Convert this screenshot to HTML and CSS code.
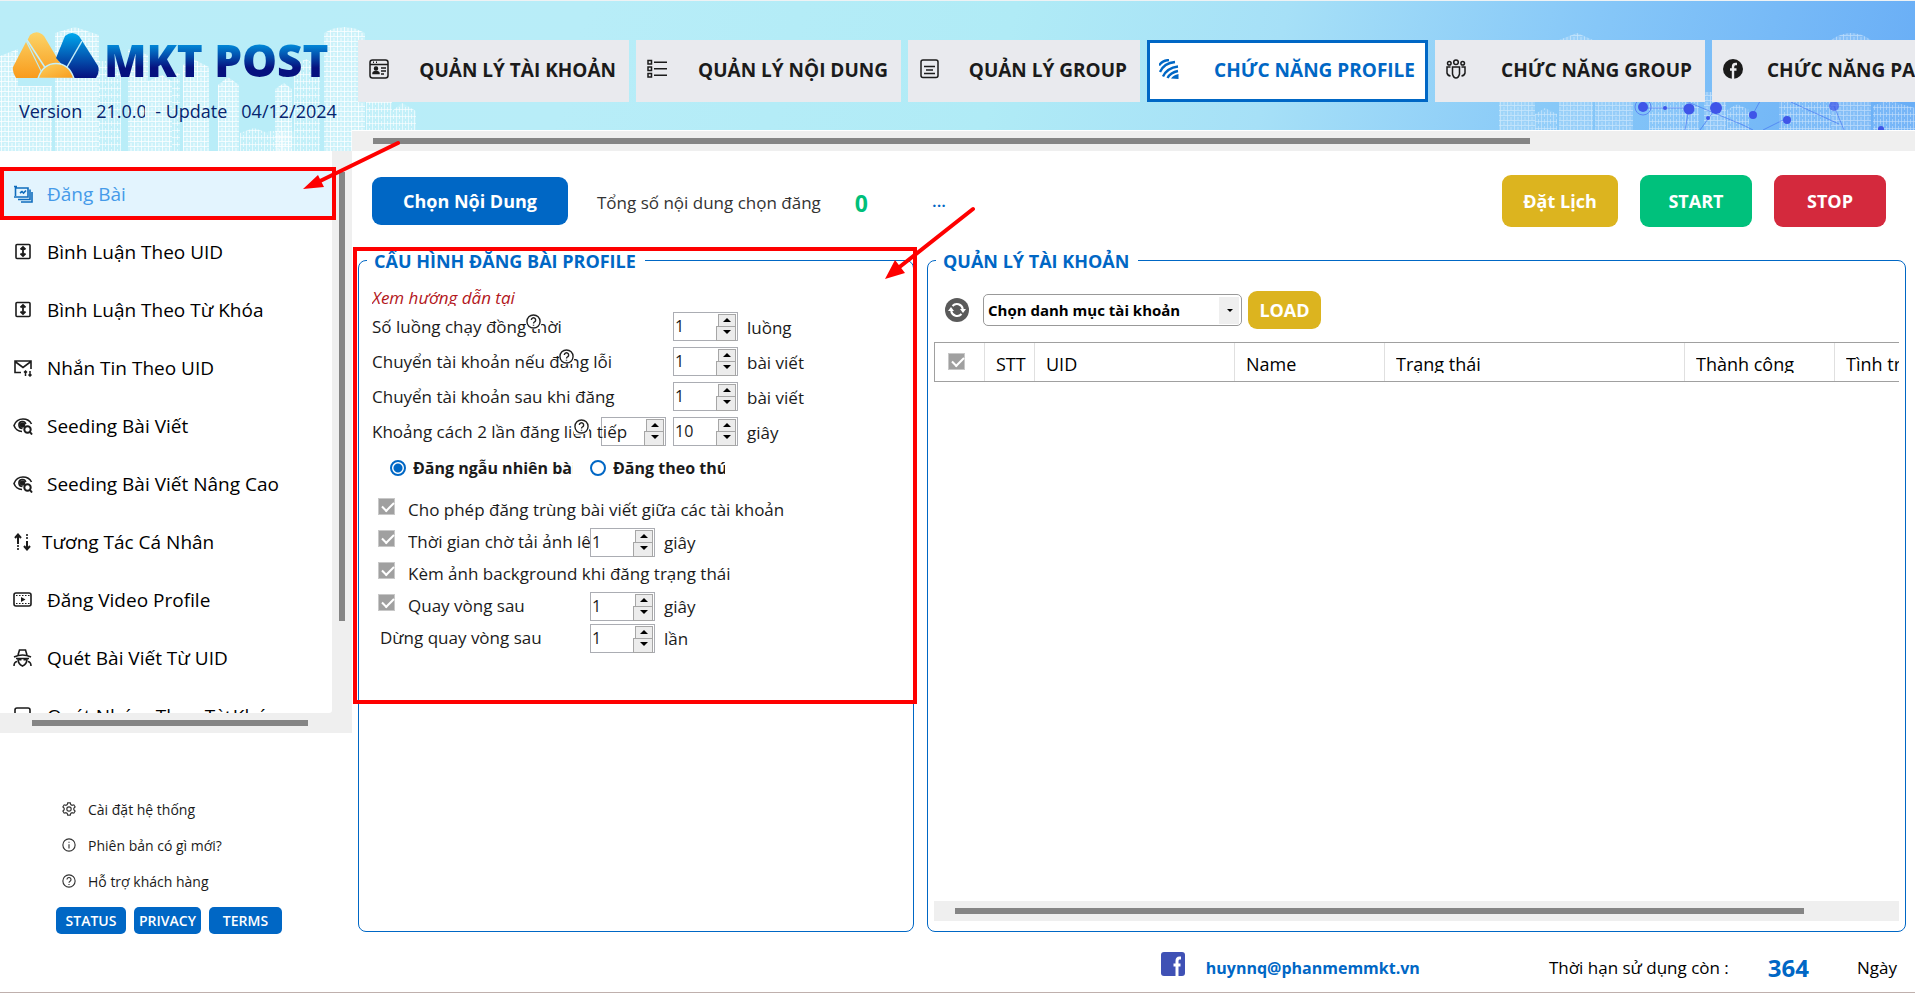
FILE: index.html
```html
<!DOCTYPE html>
<html lang="vi">
<head>
<meta charset="utf-8">
<title>MKT POST</title>
<link rel="stylesheet" href="styles.css">
</head>
<body>
<svg class="defs" aria-hidden="true">
  <defs>
    <linearGradient id="gold" x1="0" y1="0" x2="0" y2="1"><stop offset="0" stop-color="#fbd468"/><stop offset="1" stop-color="#f99b1c"/></linearGradient>
    <linearGradient id="goldArc" x1="0" y1="0" x2="1" y2="1"><stop offset="0" stop-color="#fcd25f"/><stop offset="1" stop-color="#f99b1c"/></linearGradient>
    <linearGradient id="navy" x1="0" y1="0" x2="0" y2="1"><stop offset="0" stop-color="#00a9ee"/><stop offset="1" stop-color="#06117f"/></linearGradient>
    <pattern id="win" width="7" height="5" patternUnits="userSpaceOnUse"><rect width="7" height="5" fill="#fff" fill-opacity=".28"/><path d="M0 .5H7M1.5 0V5M5 2V5" stroke="#fff" stroke-opacity=".75"/></pattern>
    <pattern id="win2" width="6" height="7" patternUnits="userSpaceOnUse"><rect width="6" height="7" fill="#fff" fill-opacity=".15"/><path d="M.5 0V7M3.5 1V6M0 3.5H6" stroke="#fff" stroke-opacity=".6"/></pattern>
    <symbol id="i-help" viewBox="0 0 16 16"><circle cx="8" cy="8" r="7"/><path d="M5.7 6.3a2.3 2.3 0 1 1 3.500 2C8.300 8.900 8 9.300 8 10M8 11.400v1.200"/></symbol>
    <symbol id="i-updown" viewBox="0 0 18 18"><rect x="2" y="1.500" width="14" height="14" rx="1"/><path d="M9 4v9M6.500 6.500 9 4l2.500 2.500M6.500 10.500 9 13l2.500-2.500" stroke-width="1.800"/></symbol>
    <symbol id="i-seed" viewBox="0 0 20 18"><path d="M9 14.500C5 14.500 2 11.500 1 8.500 2.500 4.500 6 2 10 2s7 2 8.500 5"/><path d="M9.500 11.500A3.500 3.500 0 1 1 12.800 7"/><circle cx="9.500" cy="8" r="2" fill="currentColor"/><circle cx="14.500" cy="12.500" r="3.200" stroke-width="2"/><path d="m17 15 2 2.500" stroke-width="2"/></symbol>
  </defs>
</svg>

<div class="app">
  <header class="top">
    <svg class="city city-left" viewBox="0 0 420 150" aria-hidden="true">
      <g fill="url(#win)">
        <path d="M0 55l18-7v102H0zM55 150V32l20-6 24 8v116zM128 150V48h4V32v16l16 6v96zM18 150V85h34v65zM148 150V80l14-6 10 6v70zM183 150V64l10-6 16 8v84zM218 150V84l10-8 11 8v66zM275 150V88l9-6 8 6v62z"/>
      </g>
      <g fill="url(#win2)">
        <path d="M99 150V60h22v90zM172 150V72h8v78zM294 150V64l12-6 14 8v84zM240 150v-18l14-5 14 5v18zM268 150v-20h52v20z"/>
      </g>
      <path fill="url(#win)" d="M324 150V32q20-12 41 0v118z"/>
      <path fill="url(#win2)" d="M366 130V100h26v30zM392 130v-20l10-8 14 8v20z"/>
    </svg>
    <svg class="city city-right" viewBox="0 0 416 110" aria-hidden="true">
      <g fill="url(#win)" opacity=".55">
        <path d="M0 110V70h36v40zM60 110V20l18-7 16 7v90zM96 110V72h38v38zM205 110V72h22v38zM332 110V20q20-14 40 0v90z"/>
      </g>
      <g fill="url(#win2)" opacity=".6"><path d="M36 110V94l10-6 12 6v16zM150 110V82h50v28zM228 110V90l10-6 12 6v20zM280 110V76h52v34zM374 110V86l14-6 28 8v22z"/></g>
      <g stroke="#3f6df0" stroke-opacity=".6" fill="none"><path d="M144 88h46M190 88l-4 22M184 80l60 25 10 5M217 88l-16 22M254 94l12-22M288 98l-24 12M270 72l70 32M335 86l10 24"/></g>
      <g fill="#3f55e8"><circle cx="144" cy="87" r="5"/><circle cx="190" cy="89" r="5.500"/><circle cx="217" cy="88" r="6"/><circle cx="254" cy="95" r="4"/><circle cx="288" cy="100" r="4"/><circle cx="335" cy="86" r="5" fill-opacity=".7"/><circle cx="166" cy="88" r="2"/><circle cx="209" cy="98" r="2"/><circle cx="382" cy="109" r="3"/></g>
      <circle cx="144" cy="87" r="8" fill="none" stroke="#5b86f3"/>
    </svg>
    <div class="brand">
      <div class="logo">
        <svg width="88" height="46" viewBox="0 0 88 46" aria-hidden="true">
          <path fill="url(#gold)" d="M18 3q7-6 14 1l16 27-15 15L15 9zM14 10l18 36H4q-4-6-3-11z"/>
          <path d="M15 8l19 29" stroke="#c5eff8" stroke-width="1.500"/>
          <path fill="url(#navy)" d="M53 4q7-6 14 0l19 30q2 6-2 12H62L44 26z"/>
          <path d="M70 9 55 35" stroke="#c5eff8" stroke-width="1.500"/>
          <path fill="url(#goldArc)" stroke="#c5eff8" stroke-width="1.500" d="M26 46.500q5-15 18-15t18 15z"/>
        </svg>
        <span class="logo-text">MKT POST</span>
      </div>
      <div class="version"><span>Version</span><span class="ver-no">21.0.0</span><span>- Update</span><span>04/12/2024</span></div>
    </div>
    <div class="tabs-wrap">
      <nav class="tabs">
        <button class="tab"><svg width="20" height="20" viewBox="0 0 20 20"><rect x="1" y="1" width="18" height="18" rx="2.500"/><path d="M1 5.500h18M4 3.300h1M7 3.300h1M12 9h5M12 12h5M12 15h3"/><circle cx="7" cy="9.500" r="1.500" fill="currentColor"/><path d="M4 14.500q0-2 3-2t3 2z" fill="currentColor"/></svg><span>QUẢN LÝ TÀI KHOẢN</span></button>
        <button class="tab"><svg width="20" height="20" viewBox="0 0 20 20"><path d="M1 1.500h3.500V5H1zM1 8h3.500v3.500H1zM1 14.500h3.500V18H1zM7 3.300h13M7 9.800h13M7 16.300h13"/></svg><span>QUẢN LÝ NỘI DUNG</span></button>
        <button class="tab"><svg width="20" height="20" viewBox="0 0 20 20"><rect x="2" y="1" width="17" height="17.500" rx="2"/><path d="M5 7.500h11M7 11h7M5 14.500h11"/></svg><span>QUẢN LÝ GROUP</span></button>
        <button class="tab active"><svg width="20" height="20" viewBox="0 0 20 20"><path d="M0 6.500Q3 1.500 10 1M1 13Q5 4 16 3M4 17.500Q8 9 19 7.500M8.500 19q3-5.500 10.500-7" stroke-width="2.400"/><path d="M12 19.500q2-3.500 7.500-4.500v5z" fill="currentColor" stroke="none"/></svg><span>CHỨC NĂNG PROFILE</span></button>
        <button class="tab"><svg width="20" height="20" viewBox="0 0 20 20"><circle cx="10" cy="3.200" r="2.300"/><circle cx="3.300" cy="4.200" r="1.800"/><circle cx="16.700" cy="4.200" r="1.800"/><path d="M6.500 8h7v7q-1 4-3.500 4t-3.500-4zM4.500 8H1v6q.5 2.500 3.500 3M15.500 8H19v6q-.5 2.500-3.500 3"/></svg><span>CHỨC NĂNG GROUP</span></button>
        <button class="tab page-tab"><svg width="20" height="20" viewBox="0 0 20 20"><circle cx="10" cy="10" r="10" fill="currentColor" stroke="none"/><path d="M14 5h-1.500Q10 5 10 8v12M7 10.500h6.500" stroke="#eaebee" stroke-width="2.400"/></svg><span>CHỨC NĂNG PAGE</span></button>
      </nav>
      <div class="hbar"><i class="thumb"></i></div>
    </div>
  </header>

  <div class="body">
    <aside class="side">
      <div class="side-scroll">
        <nav class="menu">
          <a class="item on" href="#"><svg width="20" height="18" viewBox="0 0 20 18"><path d="M2.500 1v10M1 1.500h3M1 12h14V3H3M5 14.500h12V4.500M8 17h11V7"/><path d="M7 8l2-1.500L10.500 8 13 5.500"/></svg><span>Đăng Bài</span></a>
          <a class="item" href="#"><svg width="20" height="18"><use href="#i-updown"/></svg><span>Bình Luận Theo UID</span></a>
          <a class="item" href="#"><svg width="20" height="18"><use href="#i-updown"/></svg><span>Bình Luận Theo Từ Khóa</span></a>
          <a class="item" href="#"><svg width="20" height="18" viewBox="0 0 20 18"><path d="M8 13.500H2V2h16v8M2 2.500l8 6 8-6"/><path d="M12.500 17v-5M11 13.500l1.500-1.500 1.500 1.500M17 12v5M15.500 15.500 17 17l1.500-1.500" stroke-width="1.500"/></svg><span>Nhắn Tin Theo UID</span></a>
          <a class="item" href="#"><svg width="20" height="18"><use href="#i-seed"/></svg><span>Seeding Bài Viết</span></a>
          <a class="item" href="#"><svg width="20" height="18"><use href="#i-seed"/></svg><span>Seeding Bài Viết Nâng Cao</span></a>
          <a class="item near" href="#"><svg width="20" height="18" viewBox="0 0 20 18"><path d="M5 2v9M2 5l3-3.500L8 5" stroke-width="2"/><path d="M5 12v5M14 1v6" stroke-dasharray="2 1"/><path d="M14 8v8M11 13l3 3.500 3-3.500" stroke-width="2"/></svg><span>Tương Tác Cá Nhân</span></a>
          <a class="item" href="#"><svg width="20" height="18" viewBox="0 0 20 18"><rect x="1" y="2" width="17" height="13" rx="2"/><path d="M3 4.500h14M3 12.500h14" stroke-dasharray="1.500 1.500" stroke-width="1"/><path d="M8 6v5l4.500-2.500z" fill="currentColor" stroke="none"/></svg><span>Đăng Video Profile</span></a>
          <a class="item" href="#"><svg width="20" height="18" viewBox="0 0 20 18"><path d="M5 6l1.500-5h6L14 6M1 8q8.500-4 17 0M3 9.500h13M5 10q0 5 4.500 7 4.500-2 4.500-7M1 17q0-4 3-4.500M18 17q0-4-3-4.500"/><path d="M6 10h2.500v1.500H6zM10.500 10H13v1.500h-2.500z" fill="currentColor" stroke="none"/></svg><span>Quét Bài Viết Từ UID</span></a>
          <a class="item" href="#"><svg width="20" height="18" viewBox="0 0 20 18"><rect x="2" y="1" width="15" height="15" rx="2"/></svg><span>Quét Nhóm Theo Từ Khóa</span></a>
        </nav>
        <div class="vbar"><i class="thumb"></i></div>
      </div>
      <div class="hbar side-hbar"><i class="thumb"></i></div>
      <div class="side-foot">
        <a class="help" href="#"><svg width="14" height="14" viewBox="0 0 16 16"><path d="M6.500 1h3l.5 2 1.500.8 2-.6 1.500 2.500L13.500 7.200v1.600l1.500 1.500-1.500 2.500-2-.6-1.500.8-.5 2h-3L6 13l-1.500-.8-2 .6L1 10.300l1.500-1.500V7.200L1 5.700l1.500-2.500 2 .6L6 3z"/><circle cx="8" cy="8" r="2.500"/></svg><span>Cài đặt hệ thống</span></a>
        <a class="help" href="#"><svg width="14" height="14" viewBox="0 0 16 16"><circle cx="8" cy="8" r="7"/><path d="M8 7v5M8 4.200v1.300"/></svg><span>Phiên bản có gì mới?</span></a>
        <a class="help" href="#"><svg width="14" height="14"><use href="#i-help"/></svg><span>Hỗ trợ khách hàng</span></a>
        <div class="mini"><button>STATUS</button><button>PRIVACY</button><button>TERMS</button></div>
      </div>
    </aside>

    <main class="main">
      <div class="bar">
        <button class="btn blue">Chọn Nội Dung</button>
        <span class="sum">Tổng số nội dung chọn đăng</span>
        <b class="zero">0</b>
        <a class="dots" href="#">...</a>
        <div class="acts">
          <button class="btn gold">Đặt Lịch</button>
          <button class="btn green">START</button>
          <button class="btn red">STOP</button>
        </div>
      </div>

      <div class="panels">
        <fieldset class="panel conf">
          <legend>CẤU HÌNH ĐĂNG BÀI PROFILE</legend>
          <a class="guide" href="#">Xem hướng dẫn tại</a>
          <div class="row"><label for="n1">Số luồng chạy đồng thời</label><svg class="q q1"><use href="#i-help"/></svg><div class="num"><input id="n1" type="number" value="1"><i></i></div><span>luồng</span></div>
          <div class="row"><label for="n2">Chuyển tài khoản nếu đăng lỗi</label><svg class="q q2"><use href="#i-help"/></svg><div class="num"><input id="n2" type="number" value="1"><i></i></div><span>bài viết</span></div>
          <div class="row"><label for="n3">Chuyển tài khoản sau khi đăng</label><div class="num"><input id="n3" type="number" value="1"><i></i></div><span>bài viết</span></div>
          <div class="row"><div class="num from"><input type="number" aria-label="Khoảng cách từ"><i></i></div><label for="n4">Khoảng cách 2 lần đăng liên tiếp</label><svg class="q q3"><use href="#i-help"/></svg><div class="num"><input id="n4" type="number" value="10"><i></i></div><span>giây</span></div>
          <div class="radios">
            <input type="radio" name="mode" id="r1" checked><label for="r1">Đăng ngẫu nhiên bài viết</label>
            <input type="radio" name="mode" id="r2"><label for="r2">Đăng theo thứ tự</label>
          </div>
          <div class="opts">
            <div class="opt"><input type="checkbox" id="c1" checked><label class="wide" for="c1">Cho phép đăng trùng bài viết giữa các tài khoản</label></div>
            <div class="opt"><input type="checkbox" id="c2" checked><label for="c2">Thời gian chờ tải ảnh lên</label><div class="num"><input type="number" value="1" aria-label="Thời gian chờ"><i></i></div><span>giây</span></div>
            <div class="opt"><input type="checkbox" id="c3" checked><label class="wide" for="c3">Kèm ảnh background khi đăng trạng thái</label></div>
            <div class="opt"><input type="checkbox" id="c4" checked><label for="c4">Quay vòng sau</label><div class="num"><input type="number" value="1" aria-label="Quay vòng sau"><i></i></div><span>giây</span></div>
            <div class="opt"><label class="lead" for="n5">Dừng quay vòng sau</label><div class="num"><input id="n5" type="number" value="1"><i></i></div><span>lần</span></div>
          </div>
        </fieldset>

        <fieldset class="panel acc">
          <legend>QUẢN LÝ TÀI KHOẢN</legend>
          <div class="pick">
            <button class="reload" aria-label="Tải lại"><svg width="24" height="24" viewBox="0 0 24 24"><circle cx="12" cy="12" r="12" fill="#5a5a5a"/><g fill="none" stroke="#fff" stroke-width="2"><path d="M7.500 8a6 6 0 0 1 10.300 3M16.500 16a6 6 0 0 1-10.300-3"/></g><path fill="#fff" d="M15 11h6l-3 4zM3 13h6L6 9z"/></svg></button>
            <div class="combo"><select aria-label="Danh mục tài khoản"><option>Chọn danh mục tài khoản</option></select></div>
            <button class="load">LOAD</button>
          </div>
          <div class="grid-box">
            <table class="grid">
              <colgroup><col class="w50"><col class="w50"><col class="w200"><col class="w150"><col class="w300"><col class="w150"><col class="w150"></colgroup>
              <thead><tr><th><input type="checkbox" checked aria-label="Chọn tất cả"></th><th><div>STT</div></th><th><div>UID</div></th><th><div>Name</div></th><th><div>Trạng thái</div></th><th><div>Thành công</div></th><th><div>Tình trạng</div></th></tr></thead>
            </table>
          </div>
          <div class="hbar grid-hbar"><i class="thumb"></i></div>
        </fieldset>
      </div>

      <footer class="foot">
        <svg width="24" height="24" viewBox="0 0 24 24" aria-hidden="true"><rect width="24" height="24" rx="3" fill="#3f51b5"/><path d="M20 6h-1.500Q16 6 16 9v15M12.500 13h7" fill="none" stroke="#fff" stroke-width="3"/></svg>
        <a class="mail" href="#">huynnq@phanmemmkt.vn</a>
        <span class="term">Thời hạn sử dụng còn :</span>
        <b class="days">364</b>
        <span>Ngày</span>
      </footer>
    </main>
  </div>

  <svg class="marks" aria-hidden="true">
    <g fill="none" stroke="#fe0000" stroke-width="4">
      <rect x="2" y="169" width="332" height="49"/>
      <rect x="355" y="249" width="560" height="453"/>
      <path d="M398 143 316 183M973 209 897 269" stroke-linecap="round"/>
    </g>
    <path fill="#fe0000" d="M303 189l15-14 6 12zM885 279l10-19 10 13z"/>
  </svg>
</div>
</body>
</html>
```
FILE: styles.css
```css
* { box-sizing: border-box; }
body { margin: 0; background: #fff; color: #1b1b1b; font-family: "Open Sans", "Noto Sans", sans-serif; font-size: 17px; }
button, input, select { font-family: inherit; margin: 0; }
a { text-decoration: none; color: inherit; }
.defs { position: absolute; width: 0; height: 0; }
.app { position: relative; display: flex; flex-direction: column; height: 100vh; border-top: 1px solid #eef2f4; border-bottom: 1px solid #bfb0ad; overflow: hidden; }
svg { fill: none; stroke: none; flex: none; }

/* header */
.top { position: relative; display: flex; flex: none; height: 150px; background: linear-gradient(105deg, #baedf8 0%, #b8edf8 30%, #b0ebf6 52%, #a6e0f7 66%, #86c7f8 82%, #68adf6 100%); }
.city { position: absolute; }
.city-left { left: 0; top: 0; width: 420px; height: 150px; }
.city-right { right: 0; top: 19px; width: 416px; height: 110px; }
.brand { position: relative; flex: none; width: 352px; padding: 31px 0 0 12px; color: #06256f; }
.logo { display: flex; height: 46px; gap: 4px; }
.logo-text { font-size: 44px; line-height: 56px; font-weight: 800; white-space: nowrap; background: linear-gradient(#00a0e9 18%, #06117f 78%); -webkit-background-clip: text; background-clip: text; color: transparent; }
.version { display: flex; padding: 20px 0 0 7px; font-size: 18px; font-weight: 500; line-height: 26px; white-space: nowrap; }
.version span { margin-right: 14px; }
.version .ver-no { width: 49px; margin-right: 10px; overflow: hidden; }
.tabs-wrap { position: relative; flex: 1; min-width: 0; display: flex; flex-direction: column; justify-content: flex-end; }
.tabs { display: flex; gap: 7px; padding: 0 0 28px 6px; overflow: hidden; }
.tab { display: flex; flex: none; align-items: center; justify-content: space-between; height: 62px; padding: 0 13px 3px 11px; border: 0; background: #e9eaee; color: #1b1b1b; font-size: 19px; font-weight: 700; white-space: nowrap; gap: 26px; }
.tab svg { stroke: currentColor; stroke-width: 1.5px; margin-bottom: 2px; }
.tab:nth-child(1) { width: 271px; }
.tab:nth-child(2) { width: 265px; }
.tab:nth-child(3) { width: 232px; }
.tab:nth-child(4) { width: 281px; }
.tab:nth-child(5) { width: 270px; }
.page-tab { justify-content: flex-start; gap: 24px; }
.tab.active { background: #fff; border: 3px solid #0067c5; color: #0067c5; padding: 0 10px 3px 9px; }
.hbar { flex: none; height: 20px; padding: 7px 0; background: #efefef; }
.thumb { display: block; background: #858585; }
.hbar .thumb { height: 6px; }
.tabs-wrap .hbar { border-top: 1px solid #fff; height: 21px; padding: 7px 0; }
.tabs-wrap .thumb { width: 74%; margin-left: 21px; }

/* sidebar */
.body { display: flex; flex: 1; min-height: 0; }
.side { flex: none; width: 352px; display: flex; flex-direction: column; }
.side-scroll { display: flex; flex: 1; min-height: 0; background: #efefef; }
.menu { flex: 1; display: flex; flex-direction: column; gap: 8px; padding-top: 18px; overflow: hidden; background: #fff; border-bottom-right-radius: 3px; }
.item { display: flex; flex: none; align-items: center; gap: 14px; height: 50px; padding: 0 0 0 13px; color: #000; font-size: 19px; line-height: 26px; white-space: nowrap; }
.item svg { stroke: currentColor; stroke-width: 1.6px; color: #1b1b1b; margin-bottom: 1px; }
.item.near { gap: 9px; }
.item.on { background: #e3f4fe; color: #459ae9; }
.item.on svg { color: #0f6cbd; }
.vbar { flex: none; width: 20px; padding: 21px 7px 0; }
.vbar .thumb { height: 449px; }
.side-hbar .thumb { width: 276px; margin-left: 32px; }
.side-foot { flex: none; height: 259px; padding: 58px 0 0 56px; }
.help { display: flex; align-items: center; gap: 12px; height: 36px; padding-left: 6px; font-size: 14px; }
.help svg { stroke: #333; stroke-width: 1.3px; }
.mini { display: flex; gap: 8px; padding-top: 8px; }
.mini button { height: 27px; padding: 0; border: 0; border-radius: 5px; background: #0067c5; color: #fff; font-size: 14px; font-weight: 600; }
.mini button:nth-child(1) { width: 70px; }
.mini button:nth-child(2) { width: 67px; }
.mini button:nth-child(3) { width: 73px; }

/* toolbar */
.main { flex: 1; min-width: 0; display: flex; flex-direction: column; padding: 0 9px 0 6px; }
.bar { display: flex; flex: none; height: 96px; align-items: flex-start; padding: 24px 20px 0 14px; }
.btn { padding: 0; border: 0; border-radius: 9px; color: #fff; font-size: 18px; font-weight: 700; }
.blue { width: 196px; height: 48px; margin-top: 2px; background: #0067c5; }
.sum { margin: 16px 34px 0 29px; line-height: 24px; color: #333; white-space: nowrap; }
.zero { margin-top: 15px; font-size: 23px; line-height: 26px; color: #00bf7a; }
.dots { margin: 14px 0 0 64px; color: #0067c5; font-weight: 600; line-height: 24px; }
.acts { display: flex; gap: 22px; margin-left: auto; }
.acts .btn { width: 112px; height: 52px; }
.acts .gold { width: 116px; background: #dcb41f; }
.acts .green { background: #00c17c; }
.acts .red { background: #d4293d; }

/* panels */
.panels { flex: 1; min-height: 0; display: grid; grid-template-columns: 556fr 979fr; gap: 13px; }
.panel { display: flex; flex-direction: column; min-width: 0; margin: 0; padding: 0 6px 0 9px; border: 1px solid #0067c5; border-radius: 8px; }
legend { padding: 2px 9px 0 7px; font-size: 18px; line-height: 24px; font-weight: 700; color: #0067c5; }
.conf { padding-left: 13px; }
.conf legend { margin-left: -5px; }
.guide { display: block; height: 21px; margin: 12px 0 3px; overflow: hidden; color: #b3161b; font-style: italic; line-height: 26px; }
.row { position: relative; display: grid; grid-template-columns: 301px 65px auto; height: 35px; align-items: center; line-height: 24px; }
.row label { grid-column: 1; grid-row: 1; position: relative; white-space: nowrap; }
.row .num { grid-column: 2; grid-row: 1; }
.row .from { grid-column: 1; justify-self: end; margin-right: 7px; }
.row > span, .opt > span { padding: 2px 0 0 9px; }
.q { position: absolute; top: 5px; width: 15px; height: 15px; background: #fff; stroke: #222; stroke-width: 1.5px; }
.q1 { left: 154px; }
.q2 { left: 187px; }
.q3 { left: 202px; }
.num { position: relative; width: 65px; height: 29px; padding: 2px 1px; border: 1px solid #abadb3; background: #fff; }
.num input { display: block; width: 42px; height: 22px; padding: 0; border: 0; outline: 0; background: transparent; color: #1b1b1b; font-size: 16px; font-weight: 500; appearance: textfield; }
.num input::-webkit-inner-spin-button { display: none; }
.num i, .num i::before { position: absolute; right: 1px; top: 1px; width: 18px; height: 13px; border: 1px solid #a6a6a6; background: #ececec; content: ""; }
.num i::before { right: -1px; top: 11px; }
.num::before, .num::after { content: ""; position: absolute; z-index: 1; right: 6px; top: 5px; border: 4px solid transparent; border-top-width: 0; border-bottom-color: #000; }
.num::after { top: 17px; border-width: 4px 4px 0; border-color: #000 transparent transparent; }
.radios { display: flex; align-items: center; height: 37px; padding-left: 18px; font-size: 16px; font-weight: 700; line-height: 24px; }
.radios label { width: 160px; margin: 0 17px 0 7px; overflow: hidden; white-space: nowrap; }
.radios label:last-child { width: 112px; }
input[type=radio] { appearance: none; flex: none; width: 16px; height: 16px; border: 2px solid #0067c5; border-radius: 50%; background: #fff; }
input[type=radio]:checked { background: radial-gradient(#0067c5 4px, #fff 5px); }
.opts { padding: 8px 0 0 6px; }
.opt { display: grid; grid-template-columns: 30px 182px 65px auto; height: 32px; align-items: center; line-height: 24px; }
.opt label { overflow: hidden; white-space: nowrap; }
.opt .wide { grid-column: 2 / -1; }
.opt .lead { grid-column: 1 / 3; padding-left: 2px; }
input[type=checkbox] { appearance: none; position: relative; display: block; width: 17px; height: 17px; margin-bottom: 8px; background: #a0a0a0; border: 1px solid #c8c8c8; }
input[type=checkbox]::after { content: ""; position: absolute; left: 3px; top: 3px; width: 10px; height: 5px; border: solid #fff; border-width: 0 0 2px 2px; transform: rotate(-45deg); }

/* accounts */
.acc { padding: 0 6px; }
.acc legend { margin-left: 2px; }
.pick { display: flex; align-items: center; height: 38px; margin: 18px 0 13px 11px; }
.reload { width: 24px; height: 24px; padding: 0; border: 0; background: none; }
.combo { position: relative; width: 259px; height: 32px; margin: 0 6px 0 14px; }
.combo select { appearance: none; width: 100%; height: 100%; padding: 0 4px; border: 1px solid #999; border-radius: 5px; background: linear-gradient(#efefef, #efefef) no-repeat right 2px center / 20px 27px #fff; color: #000; font-size: 15px; font-weight: 700; }
.combo::after { content: ""; position: absolute; right: 9px; top: 15px; border: 3px solid transparent; border-top-color: #000; border-bottom: 0; }
.load { width: 73px; height: 38px; padding: 0; border: 0; border-radius: 9px; background: #dcb41f; color: #fff; font-size: 18px; font-weight: 700; }
.grid-box { flex: 1; min-height: 0; overflow: hidden; }
.grid { width: 1050px; table-layout: fixed; border-collapse: separate; border-spacing: 0; border: 1px solid #a0a0a0; }
.grid th { height: 38px; padding: 0 0 0 11px; border-right: 1px solid #e0e0e0; text-align: left; vertical-align: top; font-size: 18px; font-weight: 400; color: #000; }
.grid th div { height: 30px; padding-top: 8px; line-height: 26px; overflow: hidden; white-space: nowrap; }
.grid input { margin: 10px 0 0 2px; }
.w50 { width: 50px; }
.w150 { width: 150px; }
.w200 { width: 200px; }
.w300 { width: 300px; }
.grid-hbar { margin-bottom: 10px; }
.grid-hbar .thumb { width: 88%; margin-left: 21px; }

/* footer */
.foot { flex: none; display: flex; justify-content: flex-end; height: 60px; padding: 20px 9px 0 0; font-size: 17px; line-height: 32px; color: #000; white-space: nowrap; }
.mail { margin: 0 129px 0 21px; color: #0067c5; font-size: 16px; font-weight: 700; }
.term { margin-right: 39px; }
.days { margin-right: 48px; font-size: 24px; color: #0067c5; }
.marks { position: absolute; left: 0; top: -1px; width: 100%; height: 100%; pointer-events: none; }
```
